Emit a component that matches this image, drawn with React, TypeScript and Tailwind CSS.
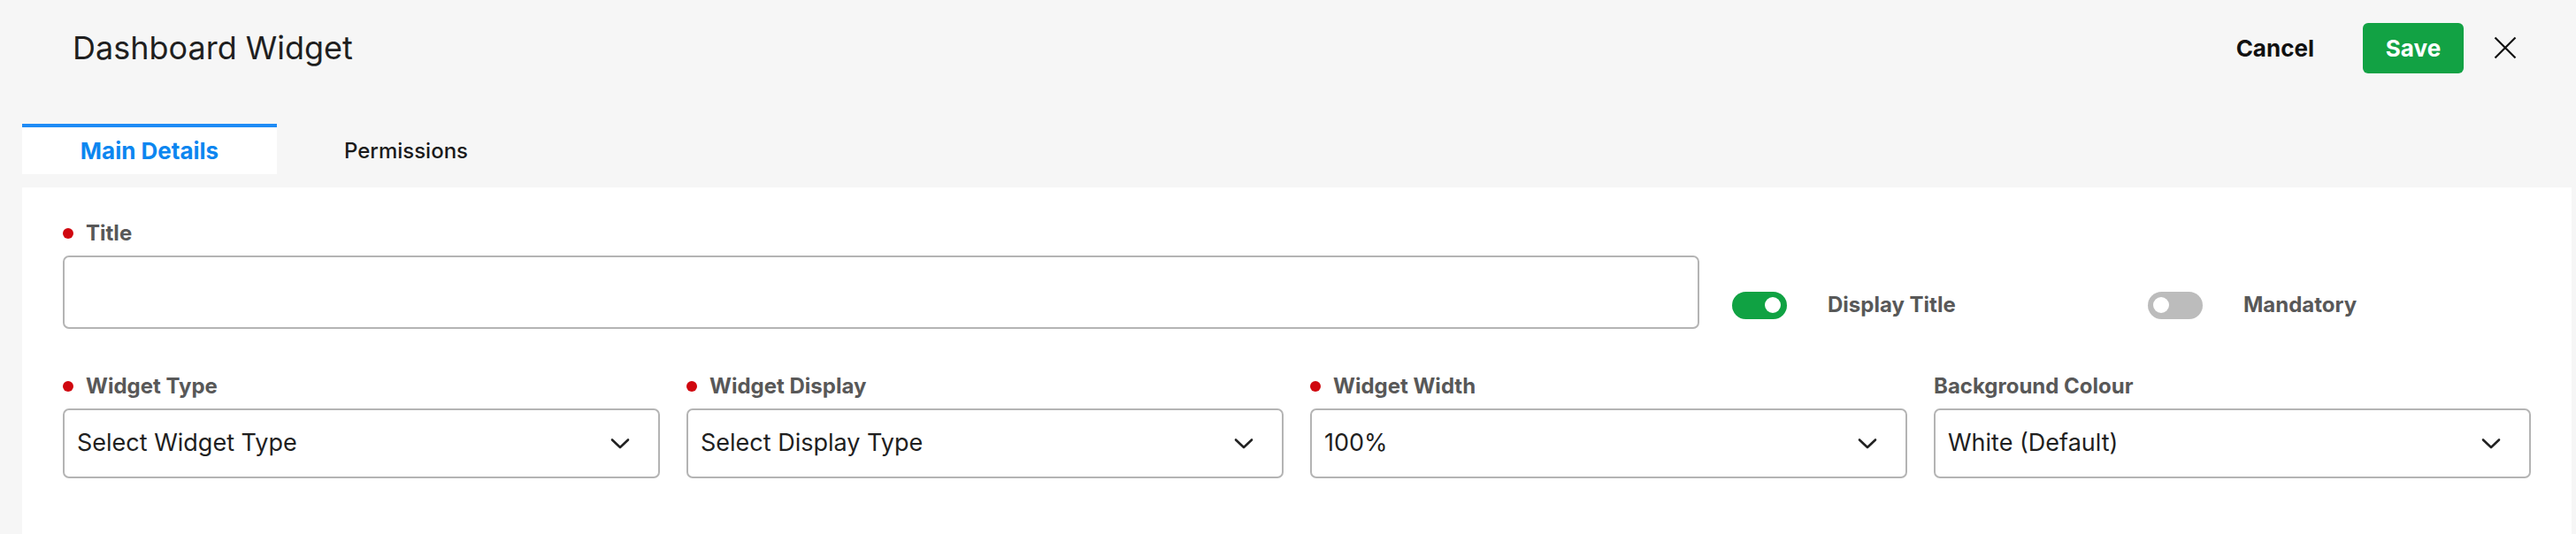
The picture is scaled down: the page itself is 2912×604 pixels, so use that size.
import { FC } from 'react'

const selects = [
  { label: 'Widget Type', value: 'Select Widget Type', required: true },
  { label: 'Widget Display', value: 'Select Display Type', required: true },
  { label: 'Widget Width', value: '100%', required: true },
  { label: 'Background Colour', value: 'White (Default)', required: false },
]

const Chevron: FC = () => (
  <svg width="22" height="14" viewBox="0 0 22 14" fill="none" className="shrink-0">
    <path d="M2 2.5 L11 11 L20 2.5" stroke="#222" strokeWidth="2.6" strokeLinecap="round" strokeLinejoin="round" />
  </svg>
)

const FieldLabel: FC<{ text: string; required?: boolean }> = ({ text, required }) => (
  <div className="flex items-center gap-[14px] h-[30px] mb-[10px]">
    {required && <span className="w-[12px] h-[12px] rounded-full bg-[#d0070f]" />}
    <span className="text-[24px] font-bold leading-[30px] text-[#585858]">{text}</span>
  </div>
)

const Toggle: FC<{ on: boolean; label: string }> = ({ on, label }) => (
  <div className="w-[470px] pl-[37px] flex items-center gap-[46px]">
    <div
      className={
        on
          ? 'w-[62px] h-[31px] rounded-full bg-[#10a243] flex items-center justify-end pr-[7px]'
          : 'w-[62px] h-[31px] rounded-full bg-[#bcbcbc] flex items-center justify-start pl-[6px]'
      }
    >
      <span className="w-[18px] h-[18px] rounded-full bg-white" />
    </div>
    <span className="text-[24px] font-bold text-[#585858]">{label}</span>
  </div>
)

export default function App() {
  return (
    <div className="min-h-screen bg-[#f6f6f6] font-['Inter',sans-serif]">
      {/* Header */}
      <div className="h-[108px] flex items-center justify-between pl-[82px] pr-[67px]">
        <h1 className="text-[36px] leading-none text-[#1f1f1f]">Dashboard Widget</h1>
        <div className="flex items-center">
          <button className="text-[26px] font-bold text-[#111]">Cancel</button>
          <button className="ml-[55px] w-[114px] h-[57px] rounded-[6px] bg-[#12a244] text-[26px] font-bold text-white">
            Save
          </button>
          <svg width="26" height="26" viewBox="0 0 26 26" className="ml-[34px]">
            <path d="M1.5 1.5 L24.5 24.5 M24.5 1.5 L1.5 24.5" stroke="#111" strokeWidth="2.2" />
          </svg>
        </div>
      </div>

      {/* Tabs */}
      <div className="mt-[32px] ml-[25px] flex">
        <div className="w-[288px] h-[57px] border-t-4 border-[#1e8bf5] bg-white flex items-center justify-center">
          <span className="text-[26px] font-bold text-[#0c86f0]">Main Details</span>
        </div>
        <div className="w-[288px] h-[57px] border-t-4 border-transparent flex items-center justify-center pl-[4px]">
          <span className="text-[24px] font-medium text-[#1a1a1a]">Permissions</span>
        </div>
      </div>

      {/* Panel */}
      <div className="mt-[15px] ml-[25px] mr-[5px] bg-white px-[46px] pt-[37px] pb-[80px]">
        <div className="flex items-start">
          <div className="w-[1850px] shrink-0">
            <FieldLabel text="Title" required />
            <input className="w-full h-[83px] border-2 border-[#b4b4b4] rounded-[7px] px-4 outline-none" />
          </div>
          <div className="flex pt-[78px]">
            <Toggle on label="Display Title" />
            <Toggle on={false} label="Mandatory" />
          </div>
        </div>

        <div className="mt-[50px] grid grid-cols-4 gap-[30px]">
          {selects.map((s) => (
            <div key={s.label}>
              <FieldLabel text={s.label} required={s.required} />
              <div className="h-[79px] border-2 border-[#b4b4b4] rounded-[7px] pl-[14px] pr-[32px] flex items-center justify-between">
                <span className="text-[27px] text-[#1f1f1f]">{s.value}</span>
                <Chevron />
              </div>
            </div>
          ))}
        </div>
      </div>
    </div>
  )
}
